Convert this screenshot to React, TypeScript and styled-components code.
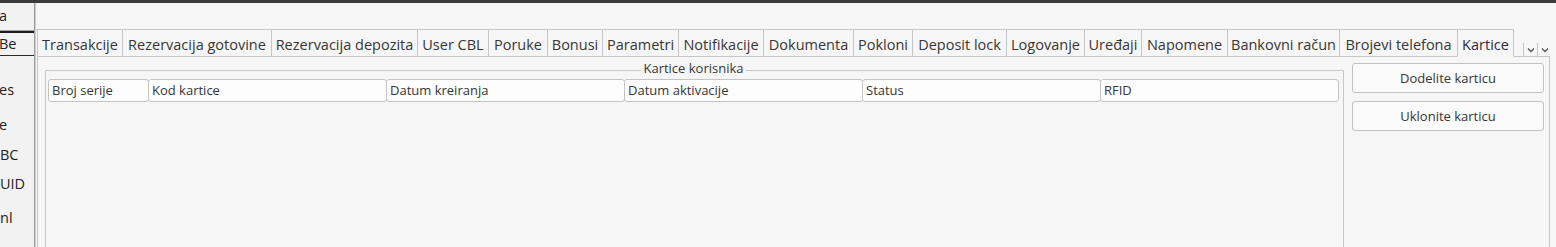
import React from "react";
import styled, { createGlobalStyle } from "styled-components";

// ====================== Global ======================
const GlobalStyle = createGlobalStyle`
  html, body {
    margin: 0;
    height: 247px;
    overflow: hidden;
    background: #f6f6f6;
    font-family: "Open Sans", "Noto Sans", sans-serif;
    color: #363636;
  }
`;

// ====================== Frame ======================
const TopBar = styled.div`
  height: 3px;
  background: #3b3b3b;
`;

const Body = styled.div`
  display: flex;
  height: 420px;
`;

// ====================== Left strip (window behind) ======================
const SideStrip = styled.div`
  width: 34px;
  flex: none;
  background: #f2f2f2;
  border-right: 1px solid #9a9a9a;
  box-shadow: 1px 0 0 #cfcfcf;
  overflow: hidden;
  font-size: 14.5px;
  color: #222;
  display: flex;
  flex-direction: column;
`;

const SideTitle = styled.div`
  height: 27px;
  line-height: 26px;
  border-bottom: 1px solid #a8a8a8;
  white-space: nowrap;
`;

const SideActive = styled.div`
  height: 22px;
  line-height: 22px;
  border-top: 2px solid #1e1e1e;
  border-bottom: 1px solid #2a2a2a;
  white-space: nowrap;
`;

const SideLabel = styled.div<{ $top: number }>`
  margin-top: ${(p) => p.$top}px;
  height: 20px;
  line-height: 20px;
  white-space: nowrap;
`;

const Cut = styled.span<{ $shift: number }>`
  display: inline-block;
  margin-left: ${(p) => p.$shift}px;
`;

// ====================== Main / tabs ======================
const Main = styled.div`
  flex: 1;
  min-width: 0;
  display: flex;
  flex-direction: column;
  padding: 26px 6px 0 2px;
`;

const TabBar = styled.div`
  display: flex;
  align-items: flex-end;
  border-bottom: 1px solid #c6c6c6;
`;

const Tab = styled.div<{ $w: number; $active?: boolean }>`
  box-sizing: border-box;
  width: ${(p) => p.$w}px;
  flex: none;
  height: ${(p) => (p.$active ? 28 : 27)}px;
  margin-bottom: ${(p) => (p.$active ? -1 : 0)}px;
  padding-top: 5px;
  border-top: 1px solid #c6c6c6;
  border-left: 1px solid #c6c6c6;
  border-right: ${(p) => (p.$active ? "1px solid #c6c6c6" : "none")};
  border-bottom: ${(p) => (p.$active ? "1px solid #f6f6f6" : "none")};
  background: #f6f6f6;
  font-size: 14.5px;
  line-height: 20px;
  text-align: center;
  white-space: nowrap;
  color: ${(p) => (p.$active ? "#35293f" : "#363636")};
`;

const ScrollButtons = styled.div`
  display: flex;
  margin-left: 9px;
  height: 13px;
`;

const ScrollButton = styled.div`
  width: 13px;
  border-left: 1px solid #c6c6c6;
  display: flex;
  align-items: center;
  justify-content: center;
`;

const Chevron = () => (
  <svg width="8" height="6" viewBox="0 0 8 6">
    <path d="M1 1.5 L4 4.5 L7 1.5" fill="none" stroke="#555" strokeWidth="1.3" />
  </svg>
);

const Pane = styled.div`
  flex: 1;
  display: flex;
  align-items: flex-start;
  gap: 8px;
  padding: 4px 5px 0 7px;
  border: 1px solid #c6c6c6;
  border-top: none;
`;

// ====================== Group box + table ======================
const GroupBox = styled.fieldset`
  box-sizing: border-box;
  width: 1299px;
  flex: none;
  min-height: 360px;
  margin: 0;
  padding: 0 4px 0 2px;
  border: 1px solid #c8c8c8;
  border-radius: 1px;
`;

const GroupTitle = styled.legend`
  margin: 0 auto;
  padding: 0 2px 4px;
  font-size: 13px;
  line-height: 15px;
  color: #363636;
`;

const HeaderRow = styled.div`
  display: flex;
  margin-top: -1px;
`;

const HeaderCell = styled.div<{ $w: number; $first?: boolean }>`
  box-sizing: border-box;
  width: ${(p) => p.$w}px;
  height: 23px;
  margin-left: ${(p) => (p.$first ? 0 : -1)}px;
  padding: 0 3px 2px;
  display: flex;
  align-items: center;
  border: 1px solid #c4c4c4;
  border-radius: 3px;
  background: #fdfdfd;
  font-size: 13px;
  color: #363636;
  white-space: nowrap;
`;

// ====================== Buttons ======================
const ButtonColumn = styled.div`
  width: 192px;
  flex: none;
  padding-top: 2px;
  display: flex;
  flex-direction: column;
  gap: 8px;
`;

const ActionButton = styled.button`
  box-sizing: border-box;
  height: 30px;
  width: 100%;
  border: 1px solid #c2c2c2;
  border-radius: 3px;
  background: #fbfbfb;
  font-family: inherit;
  font-size: 13px;
  color: #363636;
  padding: 0 0 1px;
`;

// ===============================================================
const tabs: { label: string; w: number }[] = [
  { label: "Transakcije", w: 85 },
  { label: "Rezervacija gotovine", w: 149 },
  { label: "Rezervacija depozita", w: 146 },
  { label: "User CBL", w: 71 },
  { label: "Poruke", w: 59 },
  { label: "Bonusi", w: 55 },
  { label: "Parametri", w: 76 },
  { label: "Notifikacije", w: 85 },
  { label: "Dokumenta", w: 90 },
  { label: "Pokloni", w: 59 },
  { label: "Deposit lock", w: 94 },
  { label: "Logovanje", w: 78 },
  { label: "Uređaji", w: 57 },
  { label: "Napomene", w: 86 },
  { label: "Bankovni račun", w: 112 },
  { label: "Brojevi telefona", w: 118 },
];

const columns: { label: string; w: number }[] = [
  { label: "Broj serije", w: 101 },
  { label: "Kod kartice", w: 239 },
  { label: "Datum kreiranja", w: 239 },
  { label: "Datum aktivacije", w: 239 },
  { label: "Status", w: 239 },
  { label: "RFID", w: 239 },
];

const App: React.FC = () => {
  return (
    <>
      <GlobalStyle />
      <TopBar />
      <Body>
        {/* window behind, mostly covered */}
        <SideStrip>
          <SideTitle>
            <Cut $shift={-1}>a</Cut>
          </SideTitle>
          <SideActive>
            <Cut $shift={-1}>Be</Cut>
          </SideActive>
          <SideLabel $top={24}>
            <Cut $shift={-1}>es</Cut>
          </SideLabel>
          <SideLabel $top={15}>
            <Cut $shift={-1}>e</Cut>
          </SideLabel>
          <SideLabel $top={10}>
            <Cut $shift={0}>BC</Cut>
          </SideLabel>
          <SideLabel $top={9}>
            <Cut $shift={0}>UID</Cut>
          </SideLabel>
          <SideLabel $top={14}>
            <Cut $shift={0}>nl</Cut>
          </SideLabel>
        </SideStrip>

        <Main>
          <TabBar>
            {tabs.map((t) => (
              <Tab key={t.label} $w={t.w}>
                {t.label}
              </Tab>
            ))}
            <Tab $w={57} $active>
              Kartice
            </Tab>
            <ScrollButtons>
              <ScrollButton>
                <Chevron />
              </ScrollButton>
              <ScrollButton>
                <Chevron />
              </ScrollButton>
            </ScrollButtons>
          </TabBar>

          <Pane>
            <GroupBox>
              <GroupTitle>Kartice korisnika</GroupTitle>
              <HeaderRow>
                {columns.map((c, i) => (
                  <HeaderCell key={c.label} $w={c.w} $first={i === 0}>
                    {c.label}
                  </HeaderCell>
                ))}
              </HeaderRow>
            </GroupBox>

            <ButtonColumn>
              <ActionButton>Dodelite karticu</ActionButton>
              <ActionButton>Uklonite karticu</ActionButton>
            </ButtonColumn>
          </Pane>
        </Main>
      </Body>
    </>
  );
};

export default App;
